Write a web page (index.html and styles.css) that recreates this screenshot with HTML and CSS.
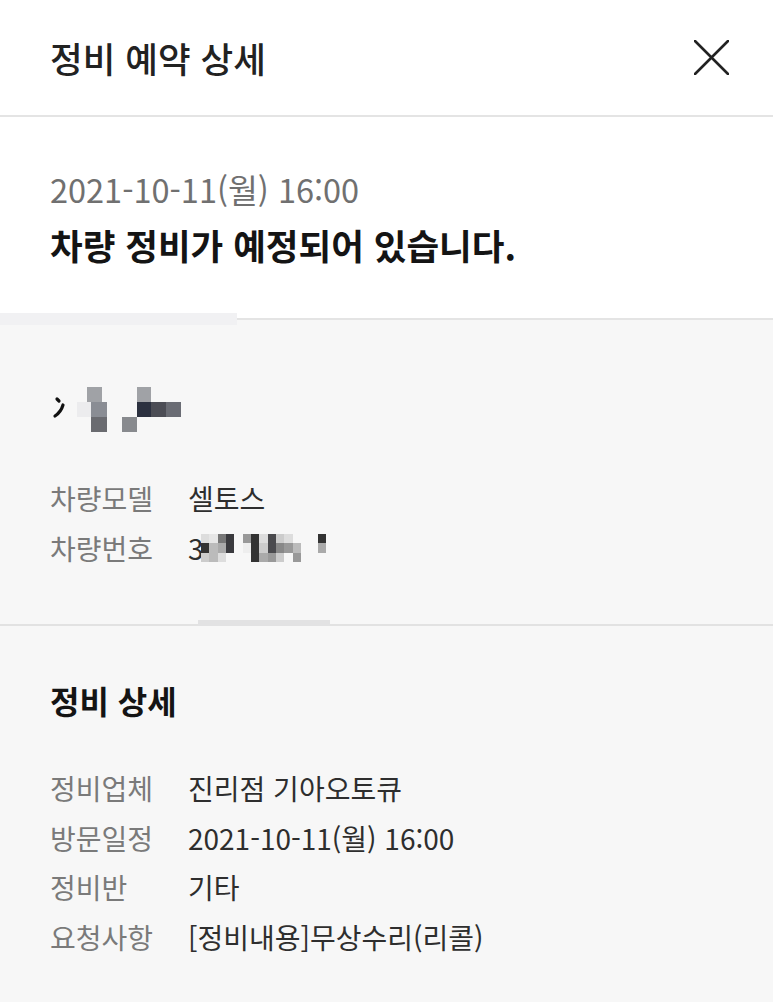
FILE: index.html
```html
<!DOCTYPE html>
<html lang="ko">
<head>
  <meta charset="UTF-8">
  <meta name="viewport" content="width=device-width, initial-scale=1">
  <title>정비 예약 상세</title>
  <link rel="stylesheet" href="styles.css">
</head>
<body>
  <header class="top-bar">
    <h1 class="top-title">정비 예약 상세</h1>
    <button class="close-btn" type="button" aria-label="닫기">
      <svg width="35" height="35" viewBox="0 0 35 35">
        <path d="M1 1 L34 34 M34 1 L1 34" stroke="#222" stroke-width="2.6" stroke-linecap="round" fill="none"/>
      </svg>
    </button>
  </header>

  <section class="summary">
    <p class="summary-date">2021-10-11(월) 16:00</p>
    <p class="summary-msg">차량 정비가 예정되어 있습니다.</p>
  </section>

  <section class="panel car-panel">
    <div class="mask-bar mask-left"></div>
    <svg class="owner-name" width="130" height="45" viewBox="0 0 130 45">
      <path d="M5 12 L7 14 M11 18 Q9 25 3 29" stroke="#111" stroke-width="3.2" stroke-linecap="round" fill="none"/>
      <rect x="35" y="0" width="15" height="15" fill="#a0a2a6"/>
      <rect x="25" y="15" width="14" height="15" fill="#ececee"/>
      <rect x="39" y="15" width="16" height="15" fill="#8a8d94"/>
      <rect x="85" y="0" width="14" height="15" fill="#a0a2a6"/>
      <rect x="85" y="15" width="14" height="15" fill="#2c3140"/>
      <rect x="99" y="15" width="15" height="15" fill="#4c4d55"/>
      <rect x="114" y="15" width="15" height="15" fill="#6a6c74"/>
      <rect x="39" y="30" width="16" height="15" fill="#6a6b70"/>
      <rect x="70" y="30" width="15" height="15" fill="#888a8e"/>
    </svg>
    <dl class="info-list">
      <div class="info-row"><dt>차량모델</dt><dd>셀토스</dd></div>
      <div class="info-row">
        <dt>차량번호</dt>
        <dd class="plate">3<svg class="plate-mask" width="132" height="28" viewBox="0 0 132 28">
          <rect x="0" y="0" width="8" height="9" fill="#ddd"/>
          <rect x="0" y="9" width="8" height="10" fill="#333"/>
          <rect x="0" y="19" width="8" height="9" fill="#ccc"/>
          <rect x="8" y="0" width="9" height="9" fill="#e6e6e6"/>
          <rect x="8" y="9" width="9" height="19" fill="#bbb"/>
          <rect x="17" y="0" width="8" height="9" fill="#777"/>
          <rect x="17" y="9" width="8" height="10" fill="#aaa"/>
          <rect x="17" y="19" width="8" height="9" fill="#ddd"/>
          <rect x="25" y="0" width="8" height="19" fill="#3a3a3e"/>
          <rect x="42" y="0" width="8" height="9" fill="#999"/>
          <rect x="42" y="9" width="8" height="10" fill="#eee"/>
          <rect x="50" y="0" width="8" height="28" fill="#333"/>
          <rect x="58" y="0" width="9" height="9" fill="#ddd"/>
          <rect x="58" y="9" width="9" height="10" fill="#ccc"/>
          <rect x="58" y="19" width="9" height="9" fill="#aaa"/>
          <rect x="67" y="0" width="8" height="19" fill="#4a4a4e"/>
          <rect x="67" y="19" width="8" height="9" fill="#999"/>
          <rect x="75" y="0" width="8" height="9" fill="#ccc"/>
          <rect x="75" y="9" width="8" height="10" fill="#888"/>
          <rect x="75" y="19" width="8" height="9" fill="#ccc"/>
          <rect x="83" y="0" width="9" height="9" fill="#ddd"/>
          <rect x="83" y="9" width="9" height="10" fill="#999"/>
          <rect x="92" y="9" width="8" height="10" fill="#bbb"/>
          <rect x="92" y="19" width="8" height="9" fill="#999"/>
          <rect x="117" y="0" width="8" height="9" fill="#333"/>
          <rect x="117" y="9" width="8" height="10" fill="#aaa"/>
        </svg></dd>
      </div>
    </dl>
    <div class="mask-bar mask-bottom"></div>
  </section>

  <section class="panel detail-panel">
    <h2 class="panel-title">정비 상세</h2>
    <dl class="info-list">
      <div class="info-row"><dt>정비업체</dt><dd>진리점 기아오토큐</dd></div>
      <div class="info-row"><dt>방문일정</dt><dd>2021-10-11(월) 16:00</dd></div>
      <div class="info-row"><dt>정비반</dt><dd>기타</dd></div>
      <div class="info-row"><dt>요청사항</dt><dd>[정비내용]무상수리(리콜)</dd></div>
    </dl>
  </section>
</body>
</html>
```

FILE: styles.css
```css
body {
  margin: 0;
  font-family: "Noto Sans CJK KR", "Noto Sans", sans-serif;
  background: #f7f7f7;
  color: #222;
  min-height: 100vh;
}
.top-bar {
  display: flex;
  align-items: center;
  justify-content: space-between;
  height: 115px;
  padding: 0 44px 0 50px;
  background: #fff;
  border-bottom: 2px solid #e4e4e4;
}
.top-title {
  margin: 0;
  font-size: 35.5px;
  font-weight: 500;
  color: #222;
}
.close-btn {
  border: none;
  background: none;
  padding: 0;
  display: flex;
  cursor: pointer;
}
.summary {
  background: #fff;
  padding: 48px 50px 45px;
  border-bottom: 2px solid #e4e4e4;
}
.summary p {
  margin: 0;
}
.summary-date {
  font-size: 32.5px;
  line-height: 48px;
  color: #707070;
}
.summary-msg {
  margin-top: 4px !important;
  font-size: 35.5px;
  line-height: 56px;
  font-weight: 700;
  color: #141414;
}
.panel {
  position: relative;
  background: #f7f7f7;
  padding: 0 50px;
}
.car-panel {
  padding-top: 67px;
  padding-bottom: 51px;
  border-bottom: 2px solid #e2e2e2;
}
.owner-name {
  display: block;
  margin-left: 2px;
}
.car-panel .info-list {
  margin-top: 42px;
}
.info-list {
  margin: 0;
}
.info-row {
  display: grid;
  grid-template-columns: 138px 1fr;
  font-size: 28px;
  line-height: 49.5px;
}
.info-row dt {
  color: #7a7a7a;
}
.info-row dd {
  margin: 0;
  color: #2e2e2e;
}
.plate {
  display: flex;
  align-items: center;
}
.plate-mask {
  margin-left: -3px;
}
.detail-panel {
  padding-top: 49px;
  padding-bottom: 40px;
}
.panel-title {
  margin: 0 0 39px;
  font-size: 32px;
  line-height: 50px;
  font-weight: 700;
  color: #141414;
}
.mask-bar {
  position: absolute;
  background: #f1f1f3;
}
.mask-left {
  left: 0;
  top: -7px;
  width: 237px;
  height: 12px;
}
.mask-bottom {
  left: 198px;
  bottom: -6px;
  width: 132px;
  height: 10px;
  background: #e2e2e3;
}
```
